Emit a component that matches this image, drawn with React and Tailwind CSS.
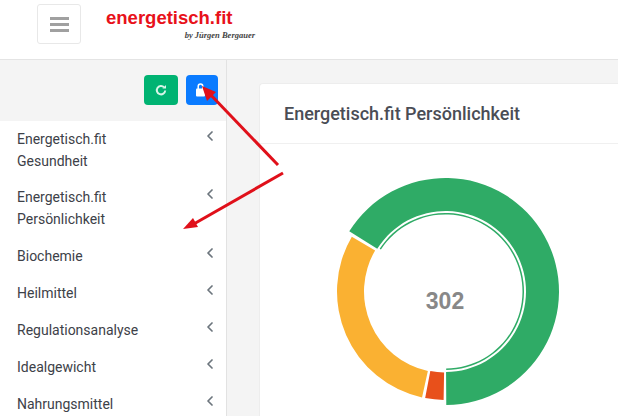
import React from 'react';
import { ChevronLeft } from 'lucide-react';

const MENU = [
  ['Energetisch.fit', 'Gesundheit'],
  ['Energetisch.fit', 'Persönlichkeit'],
  ['Biochemie'],
  ['Heilmittel'],
  ['Regulationsanalyse'],
  ['Idealgewicht'],
  ['Nahrungsmittel'],
];

const CX = 445.5;
const CY = 291.5;

const point = (r, deg) => {
  const a = ((deg - 90) * Math.PI) / 180;
  return `${(CX + r * Math.cos(a)).toFixed(2)} ${(CY + r * Math.sin(a)).toFixed(2)}`;
};

// ring segment, angles clockwise from 12 o'clock
const segment = (inner, outer, from, to) => {
  const large = to - from > 180 ? 1 : 0;
  return `M${point(outer, from)} A${outer} ${outer} 0 ${large} 1 ${point(outer, to)} L${point(inner, to)} A${inner} ${inner} 0 ${large} 0 ${point(inner, from)} Z`;
};

const Donut = () => (
  <div className="relative w-[228px] h-[228px]">
    <svg width="228" height="228" viewBox="331 177 228 228" className="block">
      <path d={segment(80.5, 113.5, 302, 539.6)} fill="#2fab66" />
      <path d={segment(77, 78.5, 303, 539.5)} fill="#2fab66" />
      <path d={segment(81.5, 108.5, 192.5, 300.3)} fill="#fab132" />
      <path d={segment(81, 108.5, 181, 190.8)} fill="#e8501b" />
    </svg>
    <div className="absolute left-0 right-0 top-[109px] text-center text-[23px] leading-[30px] font-bold text-[#888888] font-['Liberation_Sans',sans-serif]">302</div>
  </div>
);

const App = () => {
  return (
    <div className="relative w-[618px] h-[416px] overflow-hidden bg-[#f4f4f4] font-['Roboto',sans-serif]">
      {/* Top bar */}
      <header className="h-[60px] bg-white border-b border-[#e4e4e4] flex pl-[37px] pt-[4px]">
        <button className="w-[44px] h-[40px] bg-white border border-[#e8e8e8] rounded-[3px] flex flex-col items-center justify-center gap-[3px]">
          <span className="block w-[19px] h-[3px] bg-[#a0a0a0]" />
          <span className="block w-[19px] h-[3px] bg-[#a0a0a0]" />
          <span className="block w-[19px] h-[3px] bg-[#a0a0a0]" />
        </button>
        <div className="ml-[25px] w-[149px] pt-[3px]">
          <div className="text-[18.5px] leading-[22px] font-bold text-[#e8111a] font-['Liberation_Sans',sans-serif] whitespace-nowrap">energetisch.fit</div>
          <div className="mt-[1px] text-right text-[8.5px] leading-[10px] italic font-bold text-[#444444] font-['Liberation_Serif',serif] whitespace-nowrap">by Jürgen Bergauer</div>
        </div>
      </header>

      <div className="flex h-[356px]">
        {/* Sidebar */}
        <aside className="w-[227px] shrink-0 border-r border-[#e2e2e2]">
          <div className="h-[61px] bg-[#f4f4f4] flex justify-end items-start pt-[15px] pr-[8px] gap-[8px]">
            <button className="w-[34px] h-[30px] rounded-[4px] bg-[#00b372] flex items-center justify-center">
              <svg width="12" height="12" viewBox="0 0 12 12" fill="none" stroke="#d8f5e8" strokeWidth="2">
                <path d="M10.2 6.5a4.2 4.2 0 1 1-1.2-3.3" />
                <path d="M11 1v3.6H7.4z" fill="#d8f5e8" stroke="none" />
              </svg>
            </button>
            <button className="w-[32px] h-[30px] rounded-[4px] bg-[#0a7bff] flex items-start justify-center pt-[8px] pr-[3px]">
              <svg width="9" height="14" viewBox="0 0 9 14" fill="none">
                <path d="M2.2 6V3.4a2.3 2.3 0 0 1 4.6 0V6" stroke="white" strokeWidth="1.5" />
                <rect x="0" y="5.5" width="9" height="8" rx="1" fill="white" />
              </svg>
            </button>
          </div>
          <nav className="h-[295px] bg-white pl-[17px] pr-[8px] overflow-hidden">
            {MENU.map((lines, i) => (
              <div key={i} className="flex justify-between items-start pt-[7px] pb-[8px] first:pb-[7px]">
                <div className="text-[14px] leading-[22px] text-[#3d4148]">
                  {lines.map((line) => (
                    <div key={line}>{line}</div>
                  ))}
                </div>
                <ChevronLeft size={16} strokeWidth={2.6} className="text-[#6c757d]" />
              </div>
            ))}
          </nav>
        </aside>

        {/* Content */}
        <main className="flex-1 pl-[32px] pt-[23px]">
          <section className="w-[400px] h-[340px] bg-white rounded-tl-[4px] border-l border-t border-[#ededed]">
            <div className="h-[60px] border-b border-[#f0f0f0] pl-[24px] pb-[1px] flex items-center">
              <h2 className="text-[18px] font-medium text-[#4a4d55] whitespace-nowrap">Energetisch.fit Persönlichkeit</h2>
            </div>
            <div className="pl-[71px] pt-[33px]">
              <Donut />
            </div>
          </section>
        </main>
      </div>

      {/* Hand drawn arrows over the screenshot */}
      <svg className="absolute inset-0 pointer-events-none" width="618" height="416" viewBox="0 0 618 416">
        <path d="M278 165 L208 92" stroke="#e0101a" strokeWidth="3" />
        <path d="M202 86 L216 92 L207 101 Z" fill="#e0101a" />
        <path d="M283 173 L192 225" stroke="#e0101a" strokeWidth="3" />
        <path d="M183 229 L193 218 L198 227 Z" fill="#e0101a" />
      </svg>
    </div>
  );
};

export default App;
